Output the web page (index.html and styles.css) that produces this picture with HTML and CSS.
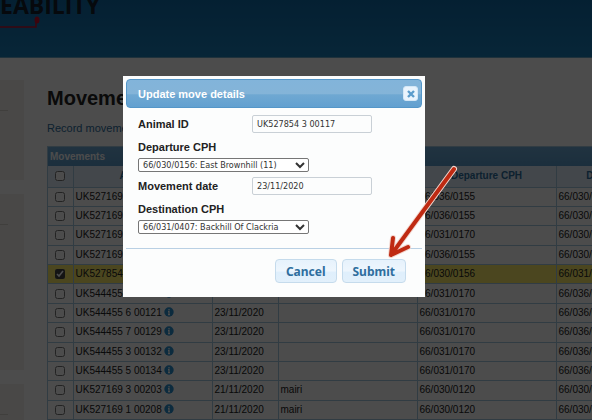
FILE: index.html
```html
<!DOCTYPE html>
<html lang="en">
<head>
  <meta charset="UTF-8">
  <title>Movements</title>
  <link rel="stylesheet" href="styles.css">
</head>
<body>
  <header class="site-header">
    <div class="logo">EABILITY</div>
    <svg class="logo-mark" width="44" height="16" viewBox="0 0 44 16">
      <path d="M0 11H36V4" fill="none" stroke="#c8102e" stroke-width="1.5" />
      <ellipse cx="37" cy="4" rx="2.5" ry="3.5" fill="#c8102e" />
    </svg>
  </header>

  <div class="page">
    <aside class="sidebar">
      <div class="side-box side-box-short"></div>
      <div class="side-box side-box-tall"></div>
      <div class="side-box side-box-tall"></div>
    </aside>

    <main class="content">
      <h1>Movements</h1>
      <p class="links"><a href="#">Record movements</a></p>

      <div class="grid">
        <div class="grid-title">Movements</div>
        <table>
          <colgroup>
            <col class="col-check">
            <col class="col-wide">
            <col class="col-date">
            <col class="col-wide">
            <col class="col-wide">
            <col class="col-wide">
          </colgroup>
          <thead>
            <tr>
              <th><input type="checkbox" aria-label="Select all"></th>
              <th>Animal ID</th>
              <th>Date</th>
              <th>Keeper</th>
              <th>Departure CPH</th>
              <th>Destination CPH</th>
            </tr>
          </thead>
          <tbody id="rows"></tbody>
        </table>
      </div>
    </main>
  </div>

  <div class="overlay"></div>

  <form class="dialog" role="dialog" aria-labelledby="dialog-title">
    <div class="dialog-title">
      <span id="dialog-title">Update move details</span>
      <button type="button" class="close" aria-label="Close">
        <svg width="8" height="8" viewBox="0 0 8 8">
          <path d="M1 1L7 7M7 1L1 7" stroke="#5c9ccc" stroke-width="2.4" />
        </svg>
      </button>
    </div>
    <div class="dialog-body">
      <div class="field">
        <label for="animal">Animal ID</label>
        <input type="text" id="animal" value="UK527854 3 00117">
      </div>
      <div class="field-stacked">
        <label for="departure">Departure CPH</label>
        <select id="departure"><option>66/030/0156: East Brownhill (11)</option></select>
      </div>
      <div class="field">
        <label for="date">Movement date</label>
        <input type="text" id="date" value="23/11/2020">
      </div>
      <div class="field-stacked">
        <label for="destination">Destination CPH</label>
        <select id="destination"><option>66/031/0407: Backhill Of Clackria</option></select>
      </div>
    </div>
    <div class="dialog-buttons">
      <button type="button">Cancel</button>
      <button type="submit">Submit</button>
    </div>
  </form>

  <svg class="arrow" width="80" height="100" viewBox="0 0 80 100">
    <g fill="none" stroke-linecap="round" stroke-linejoin="round">
      <path d="M74 8L11 94M13 77L11 94L28 86" stroke="#f3d5cd" stroke-width="6" />
      <path d="M74 8L11 94M13 77L11 94L28 86" stroke="#bf2a12" stroke-width="4" />
    </g>
  </svg>

  <script src="script.js"></script>
</body>
</html>
```
FILE: styles.css
```css
* {
  box-sizing: border-box;
}

body {
  position: relative;
  margin: 0;
  height: 100vh;
  overflow: hidden;
  background: #fff;
  color: #222;
  font-family: "Liberation Sans", Arial, sans-serif;
  font-size: 10px;
}

.site-header {
  height: 58px;
  background: linear-gradient(#106ba8, #1a7fba);
  border-bottom: 1px solid #6aa8c8;
}

.logo {
  height: 16px;
  color: #14202c;
  font-family: "Open Sans", sans-serif;
  font-size: 23px;
  font-weight: bold;
  line-height: 10px;
}

.logo-mark {
  display: block;
}

.page {
  display: flex;
  gap: 23px;
}

.sidebar {
  flex: none;
  display: flex;
  flex-direction: column;
  gap: 14px;
  width: 24px;
  padding-top: 22px;
}

.side-box {
  background: #f4f2ee;
}

/* rule under the box heading */
.side-box::before {
  content: "";
  display: block;
  width: 8px;
  height: 30px;
  border-bottom: 1px solid #d8d4cc;
}

.side-box-short {
  height: 100px;
}

.side-box-tall {
  height: 176px;
}

.content {
  flex: 1;
  min-width: 0;
}

h1 {
  margin: 28px 0 0;
  font-size: 20px;
  line-height: 24px;
}

.links {
  margin: 10px 0;
  font-size: 11px;
  line-height: 16px;
}

.links a {
  color: #2e6e9e;
  text-decoration: none;
}

/* grid */
.grid {
  width: 649px;
  border: 1px solid #a6c9e2;
}

.grid-title {
  height: 19px;
  padding-left: 2px;
  background: linear-gradient(#6eaad6, #5c9ccc);
  color: #fff;
  font-weight: bold;
  line-height: 19px;
}

table {
  width: 100%;
  height: 254px;
  table-layout: fixed;
  border-collapse: collapse;
}

.col-check {
  width: 25px;
}

.col-wide {
  width: 139px;
}

.col-date {
  width: 66px;
}

th,
td {
  padding: 0 2px;
  border: 1px solid #a6c9e2;
  border-top: 0;
  white-space: nowrap;
  line-height: 16px;
}

th {
  height: 21px;
  background: #dfeffc;
  color: #2e6e9e;
}

td {
  height: 19px;
  text-align: left;
}

th:first-child,
td:first-child {
  border-left: 0;
  text-align: center;
}

.selected td {
  background: #fbec68;
}

input[type="checkbox"] {
  display: block;
  width: 10px;
  height: 10px;
  margin: 0 auto;
  accent-color: #444;
}

.info {
  margin-left: 2px;
  vertical-align: -1px;
}

/* dialog */
.overlay {
  position: absolute;
  inset: 0;
  background: rgba(0, 0, 0, 0.7);
}

.dialog {
  position: absolute;
  top: 76px;
  left: 123px;
  width: 302px;
  padding: 3px;
  background: #fcfdfd;
  border: 0;
}

.dialog-title {
  display: flex;
  align-items: center;
  justify-content: space-between;
  height: 29px;
  padding: 0 3px 0 11px;
  background: linear-gradient(#82b4da, #84b4d8 50%, #6fa8d2 55%, #62a0d0);
  border: 1px solid #5496c8;
  border-radius: 4px;
  color: #fff;
  font-size: 11px;
  font-weight: bold;
}

.close {
  display: flex;
  align-items: center;
  justify-content: center;
  width: 15px;
  height: 15px;
  padding: 0;
  background: #eaf4fd;
  border: 1px solid #d4e7f6;
  border-radius: 3px;
}

.dialog-body {
  padding: 7px 12px 14px;
}

.field {
  display: flex;
  justify-content: space-between;
  height: 23px;
  padding-right: 38px;
}

.field-stacked + .field {
  margin-top: 5px;
}

.field-stacked {
  display: flex;
  flex-direction: column;
  gap: 2px;
}

label {
  color: #222;
  font-size: 11px;
  font-weight: bold;
  line-height: 18px;
}

.dialog input,
.dialog select {
  color: #333;
  font-family: "DejaVu Sans Condensed", "DejaVu Sans", sans-serif;
  font-size: 9px;
}

.dialog input {
  width: 120px;
  height: 18px;
  padding: 0 4px;
  background: #fcfdfd;
  border: 1px solid #c9d0d6;
  border-radius: 2px;
}

.dialog select {
  width: 171px;
  height: 14px;
  padding: 0;
  background-color: #fff;
  border: 1px solid #767676;
  border-radius: 2px;
}

.dialog-buttons {
  display: flex;
  justify-content: flex-end;
  gap: 5px;
  padding: 10px 16px 11px;
  border-top: 1px solid #b9d0e4;
}

.dialog-buttons button {
  height: 24px;
  padding: 0 10px;
  background: linear-gradient(#e6f2fc, #eef6fd 50%, #dfeffc 55%, #e2f0fb);
  border: 1px solid #c5dbec;
  border-radius: 4px;
  color: #2e6e9e;
  font-family: "Noto Sans", sans-serif;
  font-size: 12px;
  font-weight: bold;
}

/* callout drawn over the dialog */
.arrow {
  position: absolute;
  top: 161px;
  left: 380px;
}
```
FILE: script.js
```js
var rows = [
  ["UK527169 3 00198", "23/11/2020", "", "66/036/0155", "66/030/0156"],
  ["UK527169 4 00199", "23/11/2020", "", "66/036/0155", "66/030/0156"],
  ["UK527169 5 00200", "23/11/2020", "", "66/031/0170", "66/030/0156"],
  ["UK527169 6 00201", "23/11/2020", "", "66/036/0155", "66/030/0156"],
  ["UK527854 3 00117", "23/11/2020", "", "66/030/0156", "66/031/0407"],
  ["UK544455 5 00120", "23/11/2020", "", "66/031/0170", "66/036/0155"],
  ["UK544455 6 00121", "23/11/2020", "", "66/031/0170", "66/036/0155"],
  ["UK544455 7 00129", "23/11/2020", "", "66/031/0170", "66/036/0155"],
  ["UK544455 3 00132", "23/11/2020", "", "66/031/0170", "66/036/0155"],
  ["UK544455 5 00134", "23/11/2020", "", "66/031/0170", "66/036/0155"],
  ["UK527169 3 00203", "21/11/2020", "mairi", "66/030/0120", "66/030/0156"],
  ["UK527169 1 00208", "21/11/2020", "mairi", "66/030/0120", "66/030/0156"]
];

var info = '<svg class="info" width="10" height="10" viewBox="0 0 10 10">' +
  '<circle cx="5" cy="5" r="4.7" fill="#2a8fd0"/>' +
  '<path d="M5 2v1.4M4 4.6h1V7.6M4 7.6h2" fill="none" stroke="#fff" stroke-width="1.2"/></svg>';

function drawRows() {
  var html = "";
  for (var i = 0; i < rows.length; i++) {
    var selected = rows[i][0] === "UK527854 3 00117";
    html += '<tr' + (selected ? ' class="selected"' : '') + '>';
    html += '<td><input type="checkbox" aria-label="Select ' + rows[i][0] + '"' + (selected ? ' checked' : '') + '></td>';
    for (var j = 0; j < rows[i].length; j++) {
      html += '<td>' + rows[i][j] + (j === 0 ? info : '') + '</td>';
    }
    html += '</tr>';
  }
  document.getElementById("rows").innerHTML = html;
}

drawRows();
```
